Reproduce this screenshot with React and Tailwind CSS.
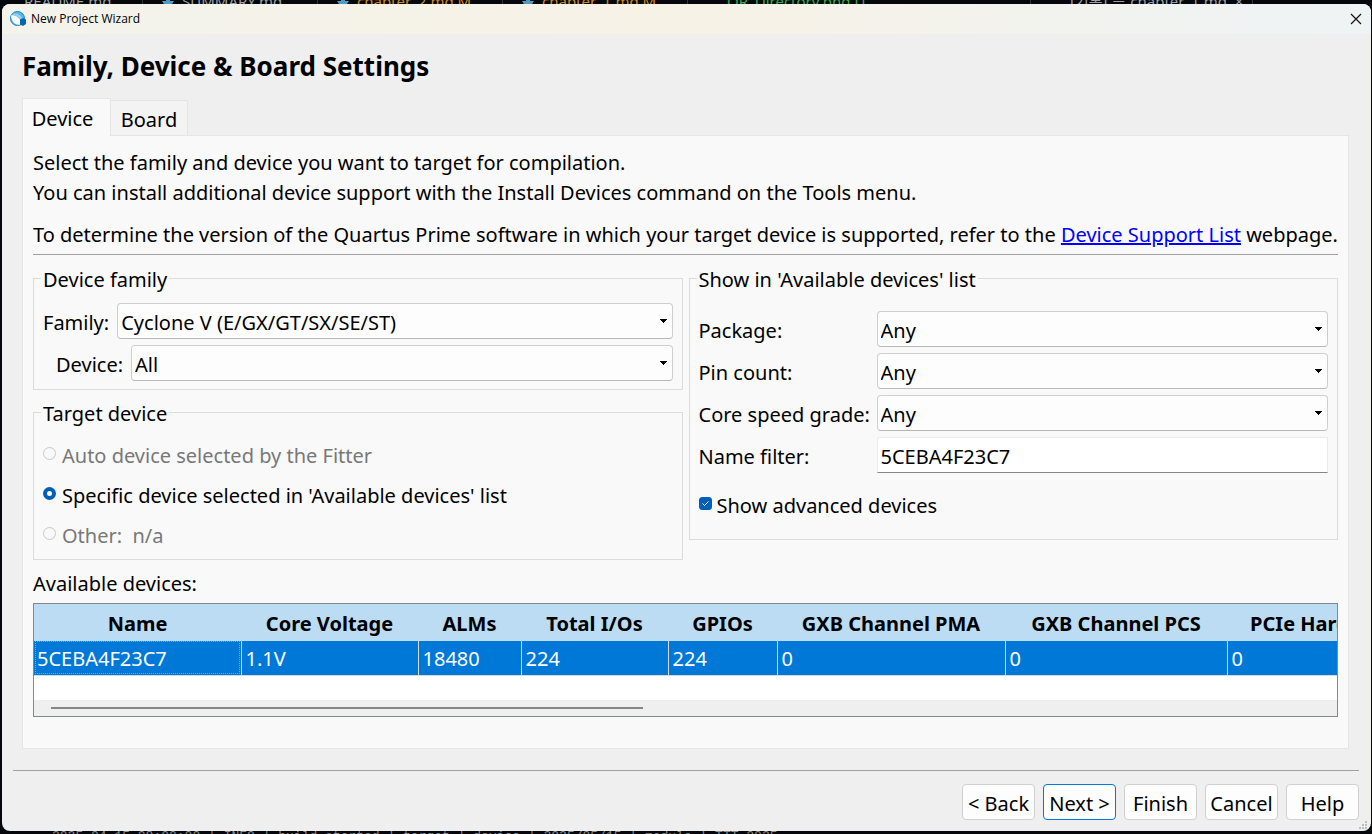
/**
 * New Project Wizard
 * Family, Device & Board Settings page
 */

import React, { useState } from 'react';

const editorTabs = [
  { label: 'README.md', width: 'w-[143px] pl-6', color: 'text-[#9aa0a6]' },
  { label: 'SUMMARY.md', width: 'w-[175px] pl-[19px]', color: 'text-[#9aa0a6]', icon: true },
  { label: 'chapter_2.md M', width: 'w-[185px] pl-[19px]', color: 'text-[#d08a1d]', icon: true },
  { label: 'chapter_1.md M', width: 'w-[185px] pl-[19px]', color: 'text-[#d08a1d]', icon: true },
  { label: 'OR_Directory.png U', width: 'w-[343px] pl-[39px]', color: 'text-[#2fae4a]' },
  { label: '[기본] ≡ chapter_1.md  ×', width: 'w-[222px] pl-[39px]', color: 'text-[#9aa0a6]' }
];

const columns = [
  { label: 'Name', value: '5CEBA4F23C7', width: 'w-[207px]' },
  { label: 'Core Voltage', value: '1.1V', width: 'w-[177px]' },
  { label: 'ALMs', value: '18480', width: 'w-[103px]' },
  { label: 'Total I/Os', value: '224', width: 'w-[147px]' },
  { label: 'GPIOs', value: '224', width: 'w-[109px]' },
  { label: 'GXB Channel PMA', value: '0', width: 'w-[228px]' },
  { label: 'GXB Channel PCS', value: '0', width: 'w-[222px]' },
  { label: 'PCIe Hard IP Blocks', value: '0', width: 'w-[240px]' }
];

const targets = [
  { id: 'auto', label: 'Auto device selected by the Fitter', disabled: true },
  { id: 'specific', label: "Specific device selected in 'Available devices' list" },
  { id: 'other', label: 'Other:  n/a', disabled: true }
];

const AppIcon = () => (
  <svg className="w-4 h-4" viewBox="0 0 16 16" aria-hidden="true">
    <circle cx="7.5" cy="7.5" r="7" fill="#5fb4e5" stroke="#1583c4" />
    <path d="M1 4.500C4 3.500 7.500 5 10 8.500L10 13.500C5.500 14.500 1.500 11 1 4.500Z" fill="#f4fafd" />
    <path d="M3.500 2.500C7.500 2 11 4 12.500 7.500L9.800 8.500C8.500 5.800 6 4 2.500 3.800Z" fill="#8fd0f2" />
    <path d="M10 8.500L13 7L16 8.500V13L13 15L10 13.500Z" fill="#0668a8" />
  </svg>
);

const Select = ({ id, value }) => (
  <div className="relative flex-1 min-w-0">
    <select
      id={id}
      defaultValue={value}
      className="block w-full h-9 pt-1 pl-[3px] pr-6 appearance-none rounded border border-[#cfcfcf] border-b-[#b8b8b8] bg-[#fdfdfd] text-black"
    >
      <option>{value}</option>
    </select>
    <svg
      className="absolute right-1.5 top-4 w-[7px] h-1 pointer-events-none"
      viewBox="0 0 7 4"
      shapeRendering="crispEdges"
      aria-hidden="true"
    >
      <path d="M0 0H7V1H6V2H5V3H4V4H3V3H2V2H1V1H0Z" fill="#000" />
    </svg>
  </div>
);

const Group = ({ title, className, children }) => (
  <fieldset className={`min-w-0 border border-[#dcdcdc] px-[9px] ${className}`}>
    <legend className="-ml-0.5 px-0.5 pt-1 leading-5">{title}</legend>
    {children}
  </fieldset>
);

const WizardButton = ({ children, primary }) => (
  <button
    type="button"
    className={`w-[73px] h-9 pt-1 rounded border bg-[#fdfdfd] whitespace-nowrap ${
      primary ? 'border-[#0078d7]' : 'border-[#d0d0d0]'
    }`}
  >
    {children}
  </button>
);

const EditorStrip = () => (
  <div className="h-1 overflow-hidden flex shrink-0 text-[15px] leading-[10px]" aria-hidden="true">
    {editorTabs.map((tab) => (
      <div key={tab.label} className={`shrink-0 flex gap-2 whitespace-pre border-r border-[#333] -mt-1 ${tab.width} ${tab.color}`}>
        {tab.icon && (
          <svg className="w-3 h-2 shrink-0" viewBox="0 0 12 8">
            <path d="M4 0H8V5H12L10 8H2L0 5H4Z" fill="#4a9cc4" />
          </svg>
        )}
        {tab.label}
      </div>
    ))}
  </div>
);

const App = () => {
  const [target, setTarget] = useState('specific');
  const [advanced, setAdvanced] = useState(true);
  const [nameFilter, setNameFilter] = useState('5CEBA4F23C7');

  return (
    <div className="min-h-screen flex flex-col bg-[#05070d] font-['Noto_Sans','Noto_Sans_CJK_KR',sans-serif] text-[20px] leading-[30px] text-black">
      <EditorStrip />

      <main className="flex-1 flex flex-col ml-0.5 mr-px rounded-lg overflow-hidden bg-[#efefef]">
        {/* Title bar */}
        <header className="flex items-center justify-between h-[30px] pl-2 pr-[9px] bg-linear-to-r from-[#f3f3ec] via-[#f7f2e6] to-[#eef3f5]">
          <div className="flex items-center gap-[5px]">
            <AppIcon />
            <span className="text-[12px] leading-4 font-['Open_Sans',sans-serif]">New Project Wizard</span>
          </div>
          <button type="button" aria-label="Close">
            <svg className="w-3 h-3" viewBox="0 0 12 12" stroke="#111" strokeWidth="1.2" aria-hidden="true">
              <path d="M1 1L11 11M11 1L1 11" />
            </svg>
          </button>
        </header>

        <div className="flex-1 flex flex-col pt-4 pl-5 pr-[22px]">
          <h1 className="text-[26px] leading-8 font-bold">Family, Device &amp; Board Settings</h1>

          {/* Tabs */}
          <div className="flex items-end mt-4 relative" role="tablist">
            <button type="button" role="tab" aria-selected="true" className="h-[38px] w-[89px] -mb-px pt-0.5 pr-2 border border-b-0 border-[#e5e5e5] bg-[#f9f9f9]">
              Device
            </button>
            <button type="button" role="tab" aria-selected="false" className="h-[35px] w-[77px] pt-1 border border-l-0 border-b-0 border-[#e5e5e5] bg-[#f3f3f3]">
              Board
            </button>
          </div>

          <section className="flex-1 flex flex-col border border-[#e5e5e5] bg-[#f9f9f9] px-2.5 pt-3">
            <p>Select the family and device you want to target for compilation.</p>
            <p>You can install additional device support with the Install Devices command on the Tools menu.</p>
            <p className="mt-3 whitespace-nowrap">
              To determine the version of the Quartus Prime software in which your target device is supported, refer to the{' '}
              <a href="#device-support" className="text-[#0000ff] underline">Device Support List</a> webpage.
            </p>
            <hr className="mt-1 border-t border-[#a0a0a0]" />

            <div className="grid grid-cols-2 gap-1.5 mt-[11px] items-start">
              <div className="flex flex-col gap-2.5">
                <Group title="Device family" className="pb-2">
                  <div className="flex flex-col gap-1.5 mt-[13px]">
                    <div className="flex items-center gap-2">
                      <label htmlFor="family" className="pt-1">Family:</label>
                      <Select id="family" value="Cyclone V (E/GX/GT/SX/SE/ST)" />
                    </div>
                    <div className="flex items-center gap-2 pl-[13px]">
                      <label htmlFor="device" className="pt-1">Device:</label>
                      <Select id="device" value="All" />
                    </div>
                  </div>
                </Group>

                <Group title="Target device" className="pb-2">
                  <div className="flex flex-col gap-2 mt-[15px]">
                    {targets.map((item) => (
                      <label
                        key={item.id}
                        className={`flex items-center gap-1.5 whitespace-pre ${item.disabled ? 'text-[#787878]' : ''}`}
                      >
                        <input
                          type="radio"
                          name="target"
                          disabled={item.disabled}
                          checked={target === item.id}
                          onChange={() => setTarget(item.id)}
                          className="appearance-none w-[13px] h-[13px] mb-1 rounded-full border border-[#c8c8c8] checked:border-4 checked:border-[#005fb8] checked:bg-white"
                        />
                        <span className="pt-0.5">{item.label}</span>
                      </label>
                    ))}
                  </div>
                </Group>
              </div>

              <Group title="Show in 'Available devices' list" className="pb-[18px]">
                <div className="grid grid-cols-[172px_1fr] gap-x-1.5 gap-y-1.5 items-center mt-[21px]">
                  <label htmlFor="package" className="pt-1">Package:</label>
                  <Select id="package" value="Any" />
                  <label htmlFor="pins" className="pt-1">Pin count:</label>
                  <Select id="pins" value="Any" />
                  <label htmlFor="speed" className="pt-1 whitespace-nowrap">Core speed grade:</label>
                  <Select id="speed" value="Any" />
                  <label htmlFor="filter" className="pt-1">Name filter:</label>
                  <input
                    id="filter"
                    type="text"
                    value={nameFilter}
                    onChange={(e) => setNameFilter(e.target.value)}
                    className="w-full min-w-0 h-9 pt-0.5 px-[3px] bg-white border border-[#ebebeb] border-b-[#868686]"
                  />
                </div>
                <label className="flex items-center gap-[5px] mt-4">
                  <span className="relative flex mb-1">
                    <input
                      type="checkbox"
                      checked={advanced}
                      onChange={(e) => setAdvanced(e.target.checked)}
                      className="appearance-none w-[13px] h-[13px] rounded-[3px] border border-[#868686] checked:border-[#005fb8] checked:bg-[#005fb8]"
                    />
                    {advanced && (
                      <svg className="absolute inset-0 w-[13px] h-[13px] pointer-events-none" viewBox="0 0 13 13" fill="none" stroke="#fff" aria-hidden="true">
                        <path d="M3.500 6.500L5.500 8.500L9.500 4.500" />
                      </svg>
                    )}
                  </span>
                  <span className="pt-0.5">Show advanced devices</span>
                </label>
              </Group>
            </div>

            <p id="available" className="mt-[9px]">Available devices:</p>

            {/* Device table */}
            <div className="mt-1 mb-[31px] border border-[#828790] bg-white overflow-hidden">
              <table className="table-fixed w-[1433px] border-collapse" aria-labelledby="available">
                <thead>
                  <tr className="h-[37px] bg-[#bcdcf4]">
                    {columns.map((col) => (
                      <th key={col.label} className={`p-0 pt-0.5 font-bold whitespace-nowrap ${col.width}`}>{col.label}</th>
                    ))}
                  </tr>
                </thead>
                <tbody>
                  <tr className="h-[34px] bg-[#0078d7] text-white border-b border-[#d8d8d8]">
                    {columns.map((col, i) => (
                      <td key={col.label} className="p-0 border-r border-[#d8d8d8]">
                        <div
                          className={`h-[33px] flex items-center pt-0.5 ${
                            i === 0 ? 'ml-px mr-px pl-px border border-dotted border-[#ff8728]' : 'pl-1'
                          }`}
                        >
                          {col.value}
                        </div>
                      </td>
                    ))}
                  </tr>
                </tbody>
              </table>
              <div className="h-4 mt-6 pl-[17px] flex items-center bg-[#efefef]">
                <div className="h-0.5 w-[46%] bg-[#868686]" />
              </div>
            </div>
          </section>
        </div>

        {/* Wizard buttons */}
        <footer className="relative mt-[21px] ml-[11px] mr-3 pt-[13px] pb-[11px] flex justify-end gap-2 border-t border-[#a0a0a0]">
          <WizardButton>&lt; Back</WizardButton>
          <WizardButton primary>Next &gt;</WizardButton>
          <WizardButton>Finish</WizardButton>
          <WizardButton>Cancel</WizardButton>
          <WizardButton>Help</WizardButton>
          <svg className="absolute -right-2 bottom-0.5 w-2 h-2" viewBox="0 0 8 8" fill="#bdbdbd" aria-hidden="true">
            <path d="M6 0H8V2H6ZM3 3H5V5H3ZM6 3H8V5H6ZM0 6H2V8H0ZM3 6H5V8H3ZM6 6H8V8H6Z" />
          </svg>
        </footer>
      </main>

      <div className="h-[3px] overflow-hidden pl-[52px] text-[13px] leading-[11px] whitespace-pre text-[#8d8d8d] font-['Liberation_Mono',monospace]" aria-hidden="true">
        2025-04-15 08:00:00 | INFO | build started | target | device | 2025/05/15 | module | TTT 2025
      </div>
    </div>
  );
};

export default App;
